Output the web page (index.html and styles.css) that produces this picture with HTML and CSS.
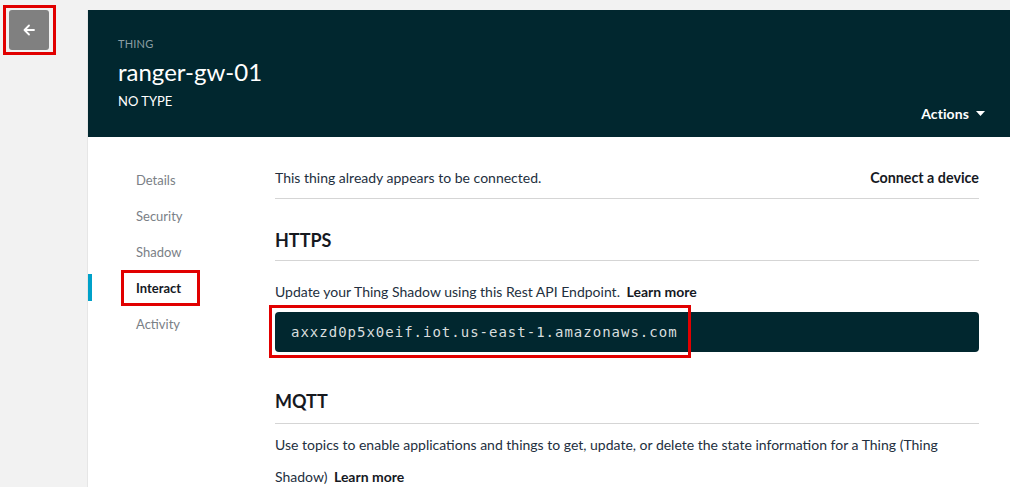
FILE: index.html
```html
<!DOCTYPE html>
<html>
<head>
<meta charset="utf-8">
<link rel="stylesheet" href="styles.css">
</head>
<body>
<div class="page">
  <div class="rail">
    <div class="back-wrap">
      <button class="back" aria-label="Back">
        <svg width="14" height="14" viewBox="0 0 14 14"><path d="M12 7H2.5M7 2.5L2.5 7L7 11.5" fill="none" stroke="#fff" stroke-width="1.8" stroke-linecap="round" stroke-linejoin="round"/></svg>
      </button>
      <span class="mark mark-back"></span>
    </div>
  </div>
  <div class="panel">
    <header class="hero">
      <div class="kind">THING</div>
      <h1 class="title">ranger-gw-01</h1>
      <div class="type">NO TYPE</div>
      <div class="actions">Actions <svg width="9" height="5" viewBox="0 0 9 5"><path d="M0 0H9L4.5 5Z" fill="#fff"/></svg></div>
    </header>
    <div class="body">
      <nav class="nav">
        <div class="nav-item">Details</div>
        <div class="nav-item">Security</div>
        <div class="nav-item">Shadow</div>
        <div class="nav-item active">Interact<span class="mark mark-nav"></span></div>
        <div class="nav-item">Activity</div>
      </nav>
      <main class="content">
        <div class="row status">
          <span>This thing already appears to be connected.</span>
          <span class="strong">Connect a device</span>
        </div>
        <h2 class="section">HTTPS</h2>
        <p class="text first">Update your Thing Shadow using this Rest API Endpoint. <b class="more">Learn more</b></p>
        <div class="code">
          <span class="endpoint">axxzd0p5x0eif.iot.us-east-1.amazonaws.com</span>
          <span class="mark mark-code"></span>
        </div>
        <h2 class="section mqtt">MQTT</h2>
        <p class="text para">Use topics to enable applications and things to get, update, or delete the state information for a Thing (Thing Shadow) <b class="more">Learn more</b></p>
      </main>
    </div>
  </div>
</div>
</body>
</html>
```
FILE: styles.css
```css
html, body {
  margin: 0;
  padding: 0;
  background: #f2f2f2;
  font-family: Lato, "Liberation Sans", sans-serif;
  overflow: hidden;
}
.page {
  display: flex;
  height: 487px;
}
.rail {
  width: 87px;
  flex: none;
}
.back-wrap {
  position: relative;
  margin: 10px 0 0 9px;
  width: 40px;
  height: 40px;
}
.back {
  width: 40px;
  height: 40px;
  border: 0;
  border-radius: 3px;
  background: #808080;
  display: flex;
  align-items: center;
  justify-content: center;
  padding: 0;
}
.mark {
  position: absolute;
  border: 3px solid #e10000;
  pointer-events: none;
}
.mark-back {
  left: -6px;
  top: -5px;
  width: 47px;
  height: 44px;
}
.panel {
  flex: 1;
  margin-top: 10px;
  background: #fff;
  border-left: 1px solid #e6e6e6;
  display: flex;
  flex-direction: column;
  min-height: 0;
}
.hero {
  flex: none;
  background: #01272f;
  height: 127px;
  box-sizing: border-box;
  padding: 27px 24px 0 30px;
  position: relative;
  color: #fff;
}
.kind {
  font-size: 11px;
  color: #8d9ea3;
  letter-spacing: 0.2px;
}
.title {
  margin: 7px 0 0;
  font-size: 24px;
  font-weight: 400;
  line-height: 30px;
}
.type {
  margin-top: 6px;
  font-size: 13px;
}
.actions {
  position: absolute;
  right: 25px;
  bottom: 15px;
  font-size: 14px;
  font-weight: 700;
  letter-spacing: 0.1px;
  display: flex;
  align-items: center;
  gap: 7px;
}
.body {
  display: flex;
  flex: none;
}
.nav {
  width: 187px;
  flex: none;
  padding-top: 25px;
}
.nav-item {
  position: relative;
  height: 36px;
  line-height: 36px;
  padding-left: 48px;
  font-size: 13px;
  color: #7a8086;
}
.nav-item.active {
  color: #16191f;
  font-weight: 700;
}
.nav-item.active::before {
  content: "";
  position: absolute;
  left: 0;
  top: 4px;
  width: 4px;
  height: 27px;
  background: #00a1c9;
}
.mark-nav {
  left: 33px;
  top: 0;
  width: 73px;
  height: 30px;
}
.content {
  flex: 1;
  padding: 0 31px 0 0;
  color: #232f3e;
}
.row {
  display: flex;
  justify-content: space-between;
  align-items: flex-start;
}
.status {
  height: 62px;
  box-sizing: border-box;
  padding-top: 32px;
  line-height: 18px;
  font-size: 14px;
  border-bottom: 1px solid #d5d5d5;
}
.strong {
  font-weight: 700;
  color: #16191f;
  font-size: 14.3px;
}
.section {
  margin: 0;
  font-size: 18px;
  font-weight: 700;
  color: #16191f;
  height: 62px;
  line-height: 20px;
  box-sizing: border-box;
  padding-top: 31px;
  border-bottom: 1px solid #d5d5d5;
}
.text {
  margin: 0;
  font-size: 14px;
  color: #232f3e;
}
.more {
  color: #16191f;
  margin-left: 3px;
}
.first {
  padding-top: 22px;
  line-height: 18px;
}
.code {
  position: relative;
  margin-top: 11px;
  height: 40px;
  background: #01272f;
  border-radius: 4px;
  display: flex;
  align-items: center;
  padding-left: 16px;
}
.endpoint {
  font-family: "DejaVu Sans Mono", "Liberation Mono", monospace;
  font-size: 14px;
  letter-spacing: 1px;
  color: #d9dede;
}
.mark-code {
  left: -6px;
  top: -7px;
  width: 416px;
  height: 47px;
}
.mqtt {
  height: 72px;
  padding-top: 39px;
}
.para {
  line-height: 32px;
  padding-top: 5px;
}
```
